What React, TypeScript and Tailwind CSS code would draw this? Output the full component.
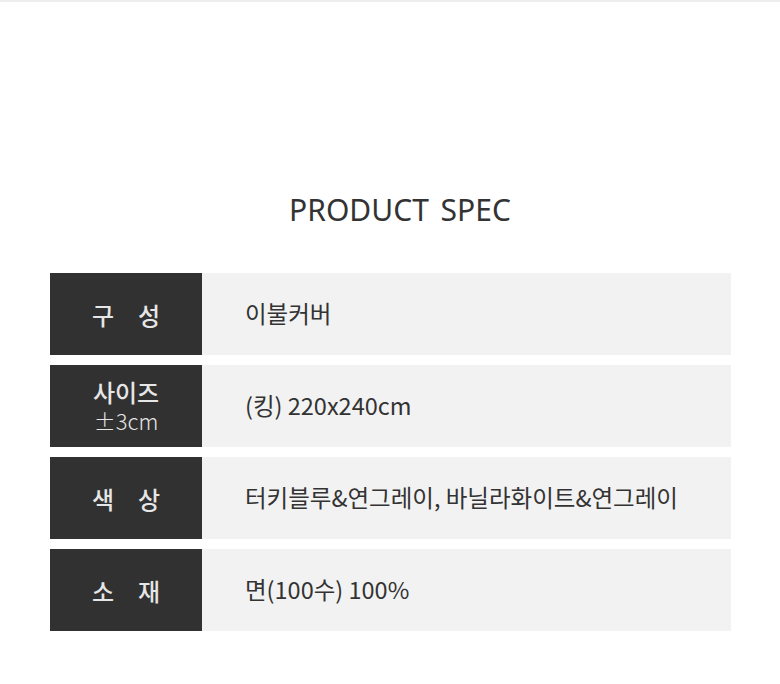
const rows = [
  { label: '구　성', value: '이불커버' },
  { label: '사이즈', sub: '±3cm', value: '(킹) 220x240cm' },
  { label: '색　상', value: '터키블루&연그레이, 바닐라화이트&연그레이' },
  { label: '소　재', value: '면(100수) 100%' },
];

export default function App() {
  return (
    <div
      className="w-[780px] h-[684px] bg-white border-t-2 border-[#eeeeee] text-[#333333]"
      style={{ fontFamily: '"Noto Sans CJK KR", "Noto Sans", sans-serif' }}
    >
      <h2
        className="pt-[187px] pl-[20px] text-center text-[30px] leading-[42px] font-normal [word-spacing:4px]"
        style={{ fontFamily: '"Noto Sans", "Noto Sans CJK KR", sans-serif' }}
      >
        PRODUCT SPEC
      </h2>

      <div className="mt-[42px] mx-[50px] w-[681px] flex flex-col gap-[10px]">
        {rows.map((row) => (
          <div key={row.label} className="flex h-[82px]">
            <div className="w-[152px] bg-[#313131] flex flex-col items-center justify-center text-[#e6e6e6]">
              <span className="text-[24px] leading-[29px] font-medium">{row.label}</span>
              {row.sub && <span className="text-[22px] leading-[29px] font-light">{row.sub}</span>}
            </div>
            <div className="flex-1 bg-[#f2f2f2] flex items-center pl-[43px] text-[23.5px]">
              {row.value}
            </div>
          </div>
        ))}
      </div>
    </div>
  );
}
